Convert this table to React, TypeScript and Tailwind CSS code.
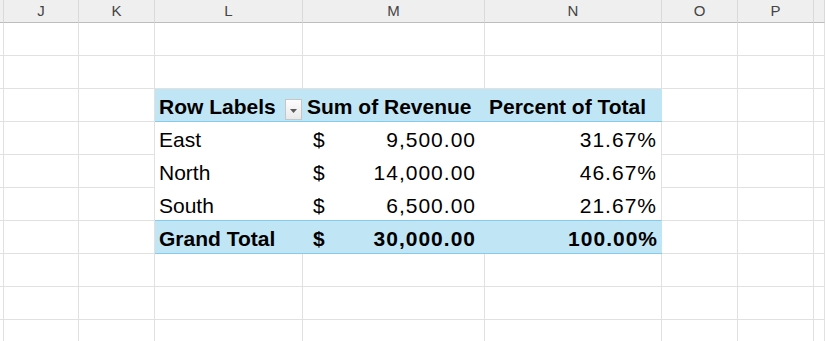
import React from "react";

const cols = ["", "J", "K", "L", "M", "N", "O", "P", ""];

type Row = { label: string; amount: string; pct: string };

const rows: Row[] = [
  { label: "East", amount: "9,500.00", pct: "31.67%" },
  { label: "North", amount: "14,000.00", pct: "46.67%" },
  { label: "South", amount: "6,500.00", pct: "21.67%" },
];

const grid = "border-r border-b border-[#e1e1e1]";
const font = { fontFamily: '"Liberation Sans", Arial, sans-serif' };

const Blank = () => <div className={grid} />;

const Dropdown = () => (
  <div className="mb-[1px] mr-[1px] flex h-[21px] w-[17px] shrink-0 items-center justify-center self-end border border-[#c6c6c6] bg-gradient-to-b from-[#fdfdfd] to-[#e9e9e9]">
    <svg width="7" height="4" viewBox="0 0 7 4" className="mt-[2px]">
      <path d="M0 0h7L3.5 4z" fill="#595959" />
    </svg>
  </div>
);

export default function App() {
  const cells: React.ReactNode[] = [];

  // column header row
  cols.forEach((c, i) => {
    cells.push(
      <div
        key={`h${i}`}
        className="border-r border-b border-r-[#d9d9d9] border-b-[#bdbdbd] bg-[#efefef] text-center text-[15px] leading-[22px] text-[#444]"
      >
        {c}
      </div>
    );
  });

  for (let r = 0; r < 10; r++) {
    const lead = [<Blank key="a" />, <Blank key="b" />, <Blank key="c" />];
    const tail = [<Blank key="o" />, <Blank key="p" />, <Blank key="q" />];
    let mid: React.ReactNode[];

    if (r === 2) {
      mid = [
        <div key="l" className="flex justify-between border-b border-[#83cceb] bg-[#c0e6f5] pl-[4px]">
          <span className="text-[21px] font-bold leading-[35px]">Row Labels</span>
          <Dropdown />
        </div>,
        <div key="m" className="border-b border-[#83cceb] bg-[#c0e6f5] pl-[4px] text-[21px] font-bold leading-[35px]">
          Sum of Revenue
        </div>,
        <div key="n" className="border-b border-[#83cceb] bg-[#c0e6f5] pl-[4px] text-[21px] font-bold leading-[35px]">
          Percent of Total
        </div>,
      ];
    } else if (r >= 3 && r <= 5) {
      const d = rows[r - 3];
      const last = r === 5 ? "border-b border-[#83cceb]" : "";
      mid = [
        <div key="l" className={`${last} pl-[4px] text-[21px] leading-[35px]`}>
          {d.label}
        </div>,
        <div key="m" className={`${last} flex justify-between pl-[10px] pr-[9px] text-[21px] leading-[35px]`}>
          <span>$</span>
          <span className="tracking-[1px]">{d.amount}</span>
        </div>,
        <div
          key="n"
          className={`${last} border-r border-r-[#e1e1e1] pr-[4px] text-right text-[21px] leading-[35px] tracking-[1px]`}
        >
          {d.pct}
        </div>,
      ];
    } else if (r === 6) {
      mid = [
        <div key="l" className="border-b border-[#83cceb] bg-[#c0e6f5] pl-[4px] text-[21px] font-bold leading-[35px]">
          Grand Total
        </div>,
        <div key="m" className="flex justify-between border-b border-[#83cceb] bg-[#c0e6f5] pl-[10px] pr-[9px] text-[21px] font-bold leading-[35px]">
          <span>$</span>
          <span className="tracking-[1px]">30,000.00</span>
        </div>,
        <div key="n" className="border-b border-[#83cceb] bg-[#c0e6f5] pr-[4px] text-right text-[21px] font-bold leading-[35px] tracking-[1px]">
          100.00%
        </div>,
      ];
    } else {
      mid = [<Blank key="l" />, <Blank key="m" />, <Blank key="n" />];
    }

    cells.push(
      <React.Fragment key={`r${r}`}>
        {lead}
        {mid}
        {tail}
      </React.Fragment>
    );
  }

  return (
    <div
      className="grid h-[341px] w-[825px] grid-cols-[4px_75px_76px_148px_182px_177px_76px_76px_1fr] grid-rows-[23px_repeat(10,33px)] overflow-hidden bg-white text-black"
      style={font}
    >
      {cells}
    </div>
  );
}
